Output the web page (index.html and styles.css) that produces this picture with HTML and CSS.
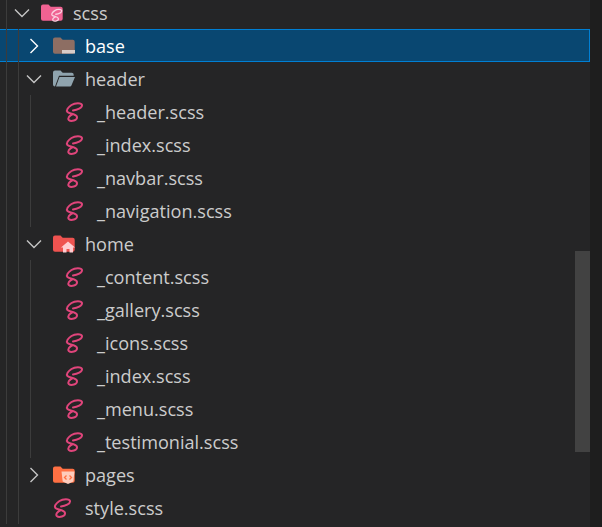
FILE: index.html
```html
<!DOCTYPE html>
<html lang="en">
<head>
    <meta charset="UTF-8">
    <meta name="viewport" content="width=device-width, initial-scale=1.0">
    <title>Explorer</title>
    <link rel="stylesheet" href="styles.css">
</head>
<body>
    <svg class="defs" width="0" height="0">
        <defs>
            <path id="sass-curl" d="M8 9.500C12 9 17.500 7 17 4 16.500 1.500 10 1.500 6.500 4 3 6.500.8 9 2.500 11 4.500 13 11.500 13 12 16 12.500 19.500 6 21 3.800 19 2.500 17.500 4 14.500 8 13" fill="none" stroke-width="2" stroke-linecap="round"/>
        </defs>
    </svg>

    <div class="tree">
        <div class="row">
            <span class="guide"></span>
            <svg class="twistie" viewBox="0 0 16 16"><path d="M1 4.500l7 7 7-7"/></svg>
            <svg class="icon" viewBox="0 1 22 22">
                <path class="pink" d="M0 5.500a2 2 0 0 1 2-2h5.500l2.200 2.200h10a2 2 0 0 1 2 2v10a2 2 0 0 1-2 2H2a2 2 0 0 1-2-2z"/>
                <use href="#sass-curl" stroke="#fbd0e0" transform="translate(9.500 7) scale(.66)"/>
            </svg>
            <span class="name">scss</span>
        </div>

        <div class="row selected">
            <span class="guide"></span><span class="guide"></span>
            <svg class="twistie" viewBox="0 0 16 16"><path d="M4.500 1l7 7-7 7"/></svg>
            <svg class="icon" viewBox="0 1 22 22">
                <path fill="#8d6e63" d="M0 5.500a2 2 0 0 1 2-2h5.500l2.200 2.200h10a2 2 0 0 1 2 2v10a2 2 0 0 1-2 2H2a2 2 0 0 1-2-2z"/>
                <rect x="9" y="16" width="13" height="3.500" fill="#d7ccc8"/>
            </svg>
            <span class="name">base</span>
        </div>

        <div class="row">
            <span class="guide"></span><span class="guide"></span>
            <svg class="twistie" viewBox="0 0 16 16"><path d="M1 4.500l7 7 7-7"/></svg>
            <svg class="icon" viewBox="0 1 22 22">
                <path fill="#90a4ae" d="M0 5.500a2 2 0 0 1 2-2h5.500l2.200 2.200h9a2 2 0 0 1 2 2v1H6L2 19.500H2a2 2 0 0 1-2-2z"/>
                <path fill="#90a4ae" d="M6.500 10H22l-3.600 8.500a1.500 1.500 0 0 1-1.400 1H3z"/>
            </svg>
            <span class="name">header</span>
        </div>

        <div class="row">
            <span class="guide"></span><span class="guide"></span><span class="guide"></span>
            <span class="spacer"></span>
            <svg class="icon" viewBox="0 0 22 22"><use href="#sass-curl" stroke="#e0457b"/></svg>
            <span class="name">_header.scss</span>
        </div>
        <div class="row">
            <span class="guide"></span><span class="guide"></span><span class="guide"></span>
            <span class="spacer"></span>
            <svg class="icon" viewBox="0 0 22 22"><use href="#sass-curl" stroke="#e0457b"/></svg>
            <span class="name">_index.scss</span>
        </div>
        <div class="row">
            <span class="guide"></span><span class="guide"></span><span class="guide"></span>
            <span class="spacer"></span>
            <svg class="icon" viewBox="0 0 22 22"><use href="#sass-curl" stroke="#e0457b"/></svg>
            <span class="name">_navbar.scss</span>
        </div>
        <div class="row">
            <span class="guide"></span><span class="guide"></span><span class="guide"></span>
            <span class="spacer"></span>
            <svg class="icon" viewBox="0 0 22 22"><use href="#sass-curl" stroke="#e0457b"/></svg>
            <span class="name">_navigation.scss</span>
        </div>

        <div class="row">
            <span class="guide"></span><span class="guide"></span>
            <svg class="twistie" viewBox="0 0 16 16"><path d="M1 4.500l7 7 7-7"/></svg>
            <svg class="icon" viewBox="0 1 22 22">
                <path fill="#ef5350" d="M0 5.500a2 2 0 0 1 2-2h5.500l2.200 2.200h10a2 2 0 0 1 2 2v10a2 2 0 0 1-2 2H2a2 2 0 0 1-2-2z"/>
                <path fill="#ffcdd2" d="M15 9.500l7 6h-2v5h-3.500v-3.500h-3v3.500H10v-5H8z"/>
            </svg>
            <span class="name">home</span>
        </div>

        <div class="row">
            <span class="guide"></span><span class="guide"></span><span class="guide"></span>
            <span class="spacer"></span>
            <svg class="icon" viewBox="0 0 22 22"><use href="#sass-curl" stroke="#e0457b"/></svg>
            <span class="name">_content.scss</span>
        </div>
        <div class="row">
            <span class="guide"></span><span class="guide"></span><span class="guide"></span>
            <span class="spacer"></span>
            <svg class="icon" viewBox="0 0 22 22"><use href="#sass-curl" stroke="#e0457b"/></svg>
            <span class="name">_gallery.scss</span>
        </div>
        <div class="row">
            <span class="guide"></span><span class="guide"></span><span class="guide"></span>
            <span class="spacer"></span>
            <svg class="icon" viewBox="0 0 22 22"><use href="#sass-curl" stroke="#e0457b"/></svg>
            <span class="name">_icons.scss</span>
        </div>
        <div class="row">
            <span class="guide"></span><span class="guide"></span><span class="guide"></span>
            <span class="spacer"></span>
            <svg class="icon" viewBox="0 0 22 22"><use href="#sass-curl" stroke="#e0457b"/></svg>
            <span class="name">_index.scss</span>
        </div>
        <div class="row">
            <span class="guide"></span><span class="guide"></span><span class="guide"></span>
            <span class="spacer"></span>
            <svg class="icon" viewBox="0 0 22 22"><use href="#sass-curl" stroke="#e0457b"/></svg>
            <span class="name">_menu.scss</span>
        </div>
        <div class="row">
            <span class="guide"></span><span class="guide"></span><span class="guide"></span>
            <span class="spacer"></span>
            <svg class="icon" viewBox="0 0 22 22"><use href="#sass-curl" stroke="#e0457b"/></svg>
            <span class="name">_testimonial.scss</span>
        </div>

        <div class="row">
            <span class="guide"></span><span class="guide"></span>
            <svg class="twistie" viewBox="0 0 16 16"><path d="M4.500 1l7 7-7 7"/></svg>
            <svg class="icon" viewBox="0 1 22 22">
                <path fill="#ff7043" d="M0 5.500a2 2 0 0 1 2-2h5.500l2.200 2.200h10a2 2 0 0 1 2 2v10a2 2 0 0 1-2 2H2a2 2 0 0 1-2-2z"/>
                <path fill="#ffccbc" d="M8.500 8.500h13l-1.200 10-5.300 2.500-5.300-2.500z"/>
                <path fill="none" stroke="#ff7043" stroke-width="1.300" d="M13.500 12.500l-2 2 2 2M16.500 12.500l2 2-2 2"/>
            </svg>
            <span class="name">pages</span>
        </div>

        <div class="row">
            <span class="guide"></span><span class="guide"></span>
            <span class="spacer"></span>
            <svg class="icon" viewBox="0 0 22 22"><use href="#sass-curl" stroke="#e0457b"/></svg>
            <span class="name">style.scss</span>
        </div>
    </div>

    <div class="scrollbar"></div>
</body>
</html>
```

FILE: styles.css
```css
html, body {
    height: 100%;
}

body {
    margin: 0;
    background-color: #1e1e1e;
    color: #cccccc;
    font-family: "Open Sans", "Noto Sans", sans-serif;
    font-size: 18.1px;
    overflow: hidden;
    position: relative;
}

.defs {
    position: absolute;
}

/* Tree */
.tree {
    width: 590px;
    height: 100%;
    background-color: #252526;
    overflow: hidden;
}

.row {
    display: flex;
    align-items: center;
    height: 33px;
    padding-left: 6px;
    box-sizing: border-box;
}

.row:first-child {
    margin-top: -4px;
}

.row.selected {
    background-color: #094771;
    color: #ffffff;
    box-shadow: inset -1px -1px #007fd4, inset 0 1px #007fd4;
}

.guide {
    flex: none;
    width: 12px;
    height: 100%;
    box-sizing: border-box;
    border-left: 1px solid #3c3c3c;
}

.twistie {
    flex: none;
    width: 16px;
    height: 16px;
    margin: 0 11px 0 -4px;
}

.twistie path {
    fill: none;
    stroke: #c5c5c5;
    stroke-width: 1.4;
}

.selected .twistie path {
    stroke: #ffffff;
}

.spacer {
    flex: none;
    width: 23px;
}

.icon {
    flex: none;
    width: 22px;
    height: 22px;
    margin-right: 10px;
}

.pink {
    fill: #f06292;
}

.name {
    white-space: nowrap;
}

/* Scrollbar */
.scrollbar {
    position: absolute;
    left: 575px;
    top: 251px;
    width: 15px;
    height: 201px;
    background-color: #424242;
}
```
